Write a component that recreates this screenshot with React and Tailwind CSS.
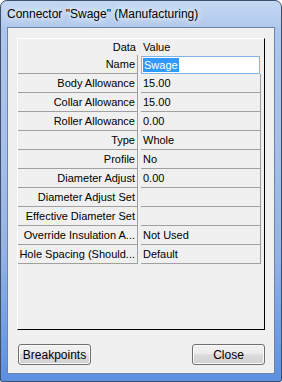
import React from "react";

const rows = [
  ["Body Allowance", "15.00"],
  ["Collar Allowance", "15.00"],
  ["Roller Allowance", "0.00"],
  ["Type", "Whole"],
  ["Profile", "No"],
  ["Diameter Adjust", "0.00"],
  ["Diameter Adjust Set", ""],
  ["Effective Diameter Set", ""],
  ["Override Insulation A...", "Not Used"],
  ["Hole Spacing (Should...", "Default"],
];

function Btn({ children }) {
  return (
    <button className="w-[73px] h-[21px] rounded-[3px] border border-[#707070] bg-[linear-gradient(to_bottom,#f2f2f2_0%,#ebebeb_50%,#dddddd_50%,#cfcfcf_100%)] shadow-[inset_0_0_0_1px_#fbfbfb] text-[12px] leading-none text-black flex items-center justify-center">
      {children}
    </button>
  );
}

export default function App() {
  return (
    <div className="w-[282px] h-[382px] overflow-hidden">
      <div
        className="w-[282px] h-[382px] rounded-t-[7px] rounded-b-[2px] border border-[#3f4f6a] bg-[linear-gradient(to_bottom,#c4d8f2_0%,#adc6ec_8%,#a4bfe9_40%,#94b4e6_65%,#6f9de3_88%,#5b8fe0_100%)] flex flex-col"
        style={{ fontFamily: '"Liberation Sans", Arial, sans-serif' }}
      >
        <div className="h-[26px] flex items-center pl-[6px] text-[12px] text-black [text-shadow:0_0_6px_#ffffff,0_0_10px_#ffffff]">
          Connector "Swage" (Manufacturing)
        </div>
        <div className="ml-[6px] w-[268px] h-[347px] border border-[#6d84aa] bg-[#f0f0f0] flex flex-col">
          <div className="ml-[9px] mt-[10px] w-[248px] h-[292px] border border-t-white border-l-white border-r-black border-b-black flex flex-col text-[11px] text-black">
            <div className="h-[16px] flex items-center">
              <div className="w-[120px] text-right pr-[2px]">Data</div>
              <div className="ml-[3px] pl-[2px]">Value</div>
            </div>
            <div className="h-[19px] flex">
              <div className="w-[120px] h-[19px] border-b border-r border-[#a0a0a0] flex items-center justify-end pr-[2px]">
                Name
              </div>
              <div className="ml-[3px] w-[119px] h-[18px] mt-[1px] border border-[#7eb4ea] bg-white flex items-center pl-[1px]">
                <span className="bg-[#3399ff] text-white px-[1px] leading-[14px]">Swage</span>
              </div>
            </div>
            {rows.map(([k, v]) => (
              <div key={k} className="h-[19px] flex">
                <div className="w-[120px] h-[19px] border-b border-r border-[#a0a0a0] flex items-center justify-end pr-[2px] whitespace-nowrap">
                  {k}
                </div>
                <div className="ml-[3px] w-[120px] h-[19px] border-b border-r border-[#a0a0a0] flex items-center pl-[2px] whitespace-nowrap">
                  {v}
                </div>
              </div>
            ))}
          </div>
          <div className="mt-[14px] ml-[10px] mr-[9px] flex justify-between">
            <Btn>Breakpoints</Btn>
            <Btn>Close</Btn>
          </div>
        </div>
      </div>
    </div>
  );
}
